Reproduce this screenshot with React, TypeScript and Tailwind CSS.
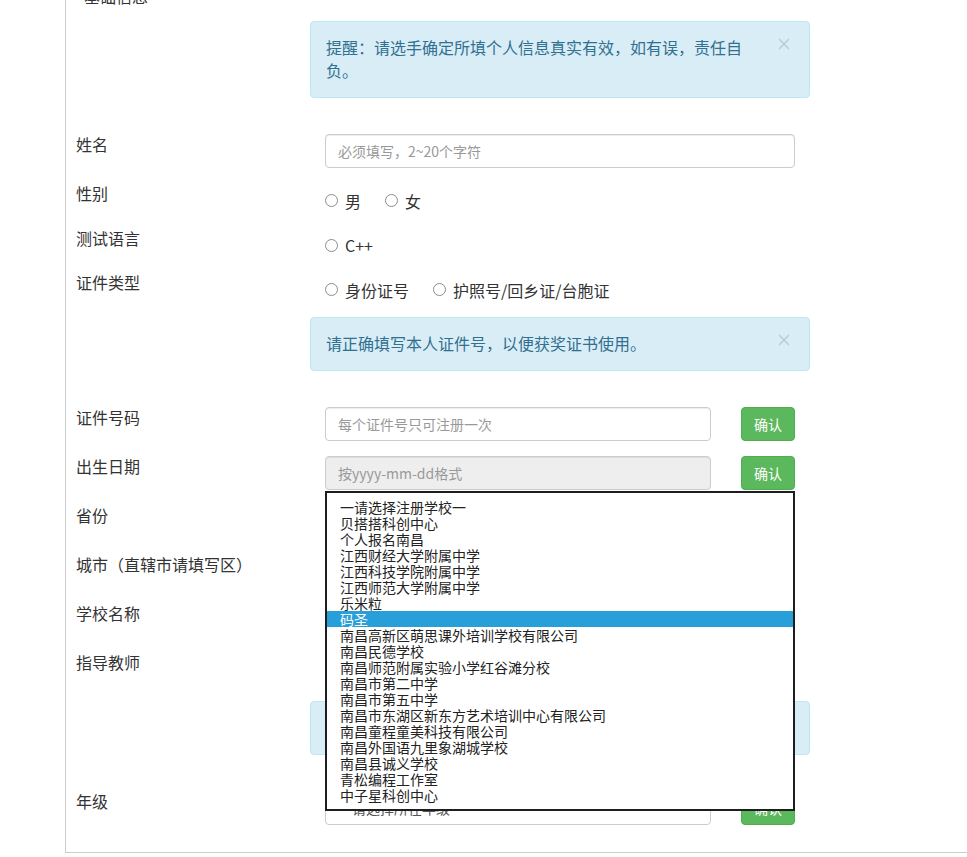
import React from 'react'

const schools = [
  '一请选择注册学校一',
  '贝搭搭科创中心',
  '个人报名南昌',
  '江西财经大学附属中学',
  '江西科技学院附属中学',
  '江西师范大学附属中学',
  '乐米粒',
  '码圣',
  '南昌高新区萌思课外培训学校有限公司',
  '南昌民德学校',
  '南昌师范附属实验小学红谷滩分校',
  '南昌市第二中学',
  '南昌市第五中学',
  '南昌市东湖区新东方艺术培训中心有限公司',
  '南昌童程童美科技有限公司',
  '南昌外国语九里象湖城学校',
  '南昌县诚义学校',
  '青松编程工作室',
  '中子星科创中心',
]

const CloseX = () => (
  <svg width="12" height="12" viewBox="0 0 12 12" className="shrink-0">
    <path d="M1 1 L11 11 M11 1 L1 11" stroke="#b3cbd9" strokeWidth="1.4" />
  </svg>
)

const Alert = ({ children, className = '' }: { children?: React.ReactNode; className?: string }) => (
  <div className={'flex min-h-[54px] w-[500px] items-start rounded border border-[#bce8f1] bg-[#d9edf7] pt-[14px] pb-[15px] pl-[15px] pr-[19px] text-base leading-[23px] text-[#31708f] ' + className}>
    <div className="w-[424px]">{children}</div>
    <div className="ml-auto mt-[2px]">
      <CloseX />
    </div>
  </div>
)

const Label = ({ children }: { children?: React.ReactNode }) => (
  <div className="w-[234px] shrink-0 text-base leading-5 text-[#333]">{children}</div>
)

const TextInput = ({ placeholder, wide, disabled }: { placeholder: string; wide?: boolean; disabled?: boolean }) => (
  <input
    readOnly
    disabled={disabled}
    placeholder={placeholder}
    className={
      (wide ? 'w-[470px] ' : 'w-[386px] ') +
      (disabled ? 'bg-[#eee] ' : 'bg-white ') +
      'ml-[15px] h-[34px] rounded border border-[#ccc] px-3 text-sm text-[#555] shadow-[inset_0_1px_1px_rgba(0,0,0,0.075)] outline-none placeholder:text-[#999]'
    }
  />
)

const OkButton = () => (
  <button className="ml-[30px] h-[34px] w-[54px] rounded border border-[#4cae4c] bg-[#5cb85c] text-sm text-white">确认</button>
)

const Radio = ({ label, last }: { label: string; last?: boolean }) => (
  <label className={'flex items-center ' + (last ? '' : 'mr-6')}>
    <span className="h-[13px] w-[13px] rounded-full border border-[#8c8c8c] bg-white" />
    <span className="ml-[7px] text-base leading-5 text-[#333]">{label}</span>
  </label>
)

const FakeSelect = ({ text, wide = true }: { text?: string; wide?: boolean }) => (
  <div className={(wide ? 'w-[470px] ' : 'w-[386px] ') + 'ml-[15px] flex h-[34px] items-center rounded border border-[#ccc] bg-white px-3 text-sm text-[#555]'}>
    {text}
  </div>
)

export default function App() {
  return (
    <div className="h-[857px] w-full overflow-hidden bg-white font-['Noto_Sans_CJK_SC','Noto_Sans',sans-serif]">
      <div className="relative ml-[65px] flow-root h-[853px] border-b border-l border-[#ccc] pl-[10px]">
        <div className="-mt-[14px] h-[35px] pl-[8px] text-base leading-5 text-[#333]">基础信息</div>

        <div className="mb-[36px] flex">
          <Label />
          <Alert>提醒：请选手确定所填个人信息真实有效，如有误，责任自负。</Alert>
        </div>

        <div className="mb-[15px] flex h-[34px]">
          <Label>姓名</Label>
          <TextInput wide placeholder="必须填写，2~20个字符" />
        </div>

        <div className="mb-[15px] flex h-[30px]">
          <Label>性别</Label>
          <div className="flex pl-[15px] pt-[5px]">
            <Radio label="男" />
            <Radio label="女" last />
          </div>
        </div>

        <div className="mb-[15px] flex h-[29px]">
          <Label>测试语言</Label>
          <div className="flex pl-[15px] pt-[5px]">
            <Radio label="C++" last />
          </div>
        </div>

        <div className="mb-[15px] flex h-[30px]">
          <Label>证件类型</Label>
          <div className="flex pl-[15px] pt-[5px]">
            <Radio label="身份证号" />
            <Radio label="护照号/回乡证/台胞证" last />
          </div>
        </div>

        <div className="mb-[36px] flex">
          <Label />
          <Alert>请正确填写本人证件号，以便获奖证书使用。</Alert>
        </div>

        <div className="mb-[15px] flex h-[34px]">
          <Label>证件号码</Label>
          <TextInput placeholder="每个证件号只可注册一次" />
          <OkButton />
        </div>

        <div className="mb-[15px] flex h-[34px]">
          <Label>出生日期</Label>
          <TextInput disabled placeholder="按yyyy-mm-dd格式" />
          <OkButton />
        </div>

        <div className="mb-[15px] flex h-[34px]">
          <Label>省份</Label>
          <FakeSelect />
        </div>

        <div className="mb-[15px] flex h-[34px]">
          <Label>城市（直辖市请填写区）</Label>
          <FakeSelect />
        </div>

        <div className="mb-[15px] flex h-[34px]">
          <Label>学校名称</Label>
          <FakeSelect />
        </div>

        <div className="mb-[15px] flex h-[34px]">
          <Label>指导教师</Label>
          <FakeSelect wide={false} />
          <OkButton />
        </div>

        <div className="mb-[36px] flex">
          <Label />
          <Alert />
        </div>

        <div className="flex h-[34px]">
          <Label>年级</Label>
          <FakeSelect wide={false} text="一请选择所在年级一" />
          <OkButton />
        </div>

        {/* opened school list */}
        <div className="absolute left-[259px] top-[491px] h-[320px] w-[470px] border-2 border-[#1e1e1e] bg-white py-[6px] text-sm leading-4 text-[#222]">
          {schools.map((s, i) => (
            <div key={s} className={'h-4 whitespace-nowrap pl-[13px] ' + (i === 7 ? 'bg-[#27a0da] text-white' : '')}>
              {s}
            </div>
          ))}
        </div>
      </div>
    </div>
  )
}
